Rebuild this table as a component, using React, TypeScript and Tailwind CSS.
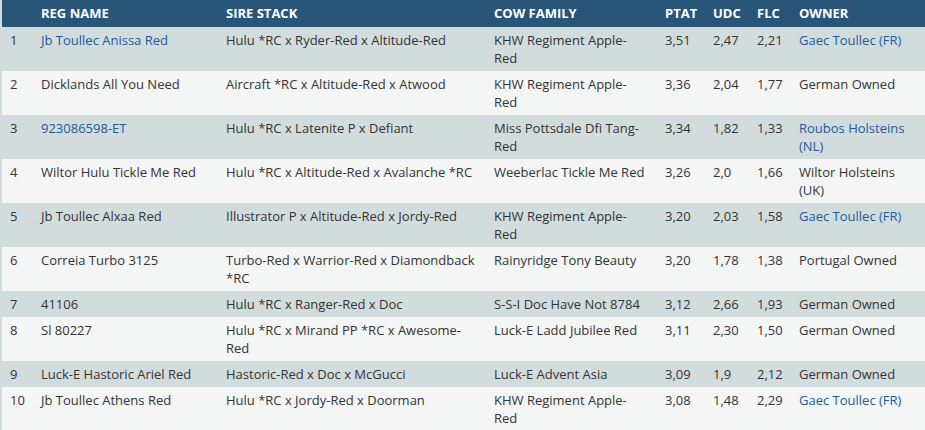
import React from 'react';

type Row = {
  n: number;
  name: string;
  nameLink?: boolean;
  sire: string;
  cow: string;
  ptat: string;
  udc: string;
  flc: string;
  owner: string;
  ownerLink?: boolean;
};

const rows: Row[] = [
  { n: 1, name: 'Jb Toullec Anissa Red', nameLink: true, sire: 'Hulu *RC x Ryder-Red x Altitude-Red', cow: 'KHW Regiment Apple-Red', ptat: '3,51', udc: '2,47', flc: '2,21', owner: 'Gaec Toullec (FR)', ownerLink: true },
  { n: 2, name: 'Dicklands All You Need', sire: 'Aircraft *RC x Altitude-Red x Atwood', cow: 'KHW Regiment Apple-Red', ptat: '3,36', udc: '2,04', flc: '1,77', owner: 'German Owned' },
  { n: 3, name: '923086598-ET', nameLink: true, sire: 'Hulu *RC x Latenite P x Defiant', cow: 'Miss Pottsdale Dfi Tang-Red', ptat: '3,34', udc: '1,82', flc: '1,33', owner: 'Roubos Holsteins (NL)', ownerLink: true },
  { n: 4, name: 'Wiltor Hulu Tickle Me Red', sire: 'Hulu *RC x Altitude-Red x Avalanche *RC', cow: 'Weeberlac Tickle Me Red', ptat: '3,26', udc: '2,0', flc: '1,66', owner: 'Wiltor Holsteins (UK)' },
  { n: 5, name: 'Jb Toullec Alxaa Red', sire: 'Illustrator P x Altitude-Red x Jordy-Red', cow: 'KHW Regiment Apple-Red', ptat: '3,20', udc: '2,03', flc: '1,58', owner: 'Gaec Toullec (FR)', ownerLink: true },
  { n: 6, name: 'Correia Turbo 3125', sire: 'Turbo-Red x Warrior-Red x Diamondback *RC', cow: 'Rainyridge Tony Beauty', ptat: '3,20', udc: '1,78', flc: '1,38', owner: 'Portugal Owned' },
  { n: 7, name: '41106', sire: 'Hulu *RC x Ranger-Red x Doc', cow: 'S-S-I Doc Have Not 8784', ptat: '3,12', udc: '2,66', flc: '1,93', owner: 'German Owned' },
  { n: 8, name: 'Sl 80227', sire: 'Hulu *RC x Mirand PP *RC x Awesome-Red', cow: 'Luck-E Ladd Jubilee Red', ptat: '3,11', udc: '2,30', flc: '1,50', owner: 'German Owned' },
  { n: 9, name: 'Luck-E Hastoric Ariel Red', sire: 'Hastoric-Red x Doc x McGucci', cow: 'Luck-E Advent Asia', ptat: '3,09', udc: '1,9', flc: '2,12', owner: 'German Owned' },
  { n: 10, name: 'Jb Toullec Athens Red', sire: 'Hulu *RC x Jordy-Red x Doorman', cow: 'KHW Regiment Apple-Red', ptat: '3,08', udc: '1,48', flc: '2,29', owner: 'Gaec Toullec (FR)', ownerLink: true },
];

const th = 'px-2 pt-[4px] pb-[5px] text-left font-bold uppercase align-top';
const td = 'px-2 py-1 align-top';

export default function App() {
  return (
    <div className="min-h-screen bg-[#f4f6f6] border-l-2 border-[#d3dcdd] text-[13px] leading-[18px] text-[#333] font-['Open_Sans',sans-serif]">
      <table className="w-[923px] table-fixed border-collapse">
        <colgroup>
          <col className="w-[31px]" />
          <col className="w-[185px]" />
          <col className="w-[268px]" />
          <col className="w-[171px]" />
          <col className="w-[48px]" />
          <col className="w-[44px]" />
          <col className="w-[42px]" />
          <col className="w-[134px]" />
        </colgroup>
        <thead>
          <tr className="bg-[#285578] text-white">
            <th className={th}></th>
            <th className={th}>Reg Name</th>
            <th className={th}>Sire Stack</th>
            <th className={th}>Cow Family</th>
            <th className={th}>PTAT</th>
            <th className={th}>UDC</th>
            <th className={th}>FLC</th>
            <th className={th}>Owner</th>
          </tr>
        </thead>
        <tbody>
          {rows.map((r) => (
            <tr key={r.n} className={r.n % 2 === 1 ? 'bg-[#d3dcdd]' : 'bg-[#f4f6f6]'}>
              <td className={td + ' text-[#333]'}>{r.n}</td>
              <td className={td}>
                {r.nameLink ? <a className="text-[#1b5a9c]">{r.name}</a> : r.name}
              </td>
              <td className={td}>{r.sire}</td>
              <td className={td}>{r.cow}</td>
              <td className={td}>{r.ptat}</td>
              <td className={td}>{r.udc}</td>
              <td className={td}>{r.flc}</td>
              <td className={td}>
                {r.ownerLink ? <a className="text-[#1b5a9c]">{r.owner}</a> : r.owner}
              </td>
            </tr>
          ))}
        </tbody>
      </table>
    </div>
  );
}
